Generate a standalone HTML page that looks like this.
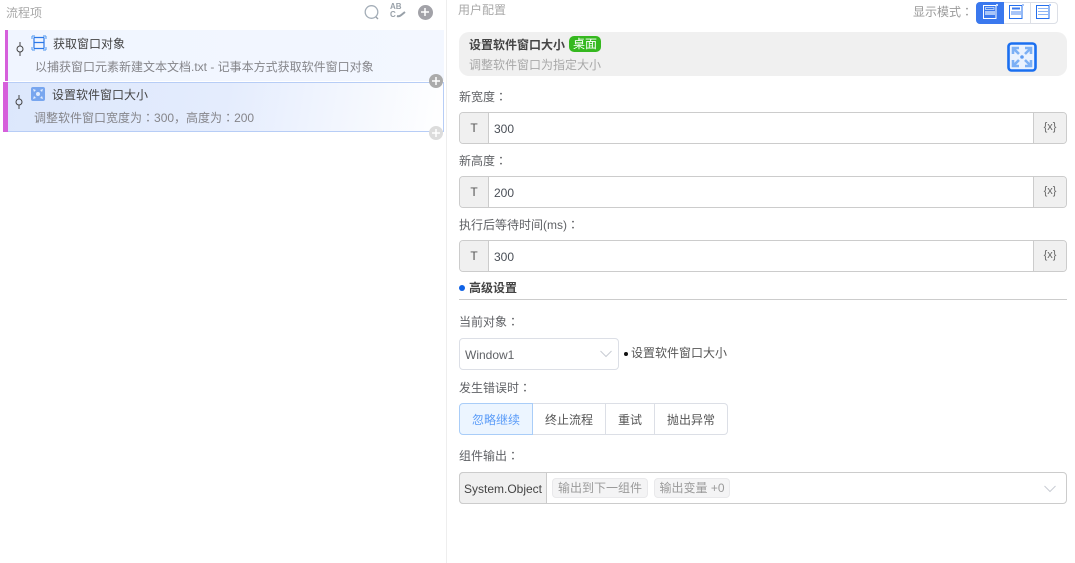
<!DOCTYPE html>
<html><head><meta charset="utf-8"><style>
*{box-sizing:border-box;margin:0;padding:0}
html,body{width:1075px;height:563px;overflow:hidden;background:#fff}
body{position:relative;font:12px/16px "Liberation Sans","Noto Sans CJK SC",sans-serif;color:#606266}
.a{position:absolute;white-space:nowrap}
.c{font-family:"Noto Sans CJK TC",sans-serif}
.lb{position:absolute;left:459px;white-space:nowrap;color:#606266;height:16px}
.inp{position:absolute;left:459px;width:608px;height:32px;border:1px solid #ccc;border-radius:4px;background:#fff;overflow:hidden}
.inp .t{position:absolute;left:0;top:0;bottom:0;width:29px;background:#f0f0f0;border-right:1px solid #ccc;text-align:center;line-height:31px;color:#555}
.inp .v{position:absolute;left:34px;top:0;line-height:32px;color:#4a4f57}
.inp .x{position:absolute;right:0;top:0;bottom:0;width:33px;background:#f0f0f0;border-left:1px solid #ccc;text-align:center;line-height:29px;color:#666;font-size:11px}
.btn{position:absolute;top:403px;height:32px;border:1px solid #dcdfe6;border-left:0;text-align:center;line-height:32px;color:#555;background:#fff}
.tag{position:absolute;top:478px;height:20px;background:#f4f4f5;border:1px solid #e9e9eb;border-radius:4px;color:#9a9a9a;line-height:18px;text-align:center}
.plus{position:absolute;width:14px;height:14px;border-radius:50%}
.plus:before{content:"";position:absolute;left:3px;top:6px;width:8px;height:2px;background:rgba(255,255,255,.75)}
.plus:after{content:"";position:absolute;left:6px;top:3px;width:2px;height:8px;background:rgba(255,255,255,.75)}
.pin{position:absolute;width:10px;height:20px}
</style></head><body>
<div class="a" style="left:446px;top:0;width:1px;height:563px;background:#eeeeee"></div>

<div class="a" style="left:6px;top:5px;color:#a8a8a8">流程项</div>
<svg class="a" style="left:363px;top:4px" width="18" height="17" viewBox="0 0 18 17" fill="none"><circle cx="8.500" cy="8" r="6.300" stroke="#a4aeb8" stroke-width="1.300"/><path d="M13 13l2 2" stroke="#98a0a8" stroke-width="1.300"/></svg>
<div class="a" style="left:390px;top:3px;font-size:8px;line-height:8px;font-weight:bold;color:#98a0a8">AB<br>C</div>
<svg class="a" style="left:395px;top:9px" width="12" height="10" viewBox="0 0 12 10" fill="none"><path d="M2 7c3 1 4-1 8-4" stroke="#98a0a8" stroke-width="2"/></svg>
<div class="plus" style="left:418px;top:5px;width:15px;height:15px;background:#a2a2a8"></div>

<!-- card 1 -->
<div class="a" style="left:5px;top:30px;width:439px;height:51px;background:linear-gradient(90deg,#f0f5ff,#f3f7ff)"></div>
<div class="a" style="left:5px;top:30px;width:3px;height:51px;background:#d65fdb"></div>
<svg class="pin" style="left:15px;top:39px" viewBox="0 0 10 20" fill="none"><path d="M5 3v4M5 13v4" stroke="#444" stroke-width="1"/><circle cx="5" cy="10" r="3" stroke="#444" stroke-width="1"/></svg>
<svg class="a" style="left:31px;top:35px" width="16" height="16" viewBox="0 0 16 16" fill="none"><path d="M3 2.500h10M3 13.500h10M3 2.500v11M13 2.500v11M3 7.500h10" stroke="#2b78e8" stroke-width="1.200"/><path d="M1 1h3M1 1v3M15 1h-3M15 1v3M1 15h3M1 15v-3M15 15h-3M15 15v-3" stroke="#6aa8f2" stroke-width="1.200"/></svg>
<div class="a" style="left:53px;top:36px;color:#444">获取窗口对象</div>
<div class="a" style="left:35px;top:59px;color:#85858a">以捕获窗口元素新建文本文档.txt - 记事本方式获取软件窗口对象</div>

<!-- card 2 -->
<div class="a" style="left:3px;top:82px;width:441px;height:50px;background:linear-gradient(100deg,#dce7fc 0%,#e4ecfd 50%,#ffffff 100%);border:1px solid #b7cdf6;border-left:0"></div>
<div class="a" style="left:3px;top:82px;width:5px;height:50px;background:#d65fdb"></div>
<svg class="pin" style="left:14px;top:92px" viewBox="0 0 10 20" fill="none"><path d="M5 3v4M5 13v4" stroke="#444" stroke-width="1"/><circle cx="5" cy="10" r="3" stroke="#444" stroke-width="1"/></svg>
<svg class="a" style="left:31px;top:87px" width="14" height="14" viewBox="0 0 14 14"><rect width="14" height="14" rx="2" fill="#78a6ef"/><path d="M2 2l3 1-2 2zM12 2l-1 3-2-2zM2 12l1-3 2 2zM12 12l-3-1 2-2z" fill="#e0ebfd"/><circle cx="7" cy="7" r="2" fill="#e0ebfd"/></svg>
<div class="a" style="left:52px;top:87px;color:#444">设置软件窗口大小</div>
<div class="a" style="left:34px;top:110px;color:#85858a">调整软件窗口宽度为<span class="c">：</span>300，高度为<span class="c">：</span>200</div>
<div class="plus" style="left:429px;top:74px;background:#ababab"></div>
<div class="plus" style="left:429px;top:126px;background:#dcdcdc"></div>

<!-- right header -->
<div class="a" style="left:458px;top:2px;color:#a8a8a8">用户配置</div>
<div class="a" style="left:913px;top:4px;color:#9a9a9a">显示模式<span class="c">：</span></div>
<div class="a" style="left:976px;top:2px;width:82px;height:22px;border:1px solid #dcdfe6;border-radius:4px"></div>
<div class="a" style="left:976px;top:2px;width:28px;height:22px;background:#3a78ee;border-radius:4px 0 0 4px"></div>
<div class="a" style="left:1030px;top:3px;width:1px;height:20px;background:#dcdfe6"></div>
<svg class="a" style="left:983px;top:4px" width="15" height="15" viewBox="0 0 15 15" fill="none"><rect x="0.500" y="1.500" width="12.500" height="13" stroke="#fff"/><rect x="2.500" y="3.500" width="8.500" height="2" fill="none" stroke="#cfe0fb" stroke-width=".8"/><rect x="2" y="7" width="10" height="4" fill="#a9c6f8"/><rect x="13" y="0" width="2" height="2" fill="#cfe0fb"/></svg>
<svg class="a" style="left:1009px;top:4px" width="15" height="15" viewBox="0 0 15 15" fill="none"><rect x="0.500" y="1.500" width="12.500" height="13" stroke="#2670ee"/><rect x="3" y="3.500" width="8" height="2" fill="#3a78ee"/><rect x="2" y="7" width="10" height="4" fill="#a9c6f8"/><rect x="13" y="0" width="2" height="2" fill="#a9c6f8"/></svg>
<svg class="a" style="left:1036px;top:4px" width="15" height="15" viewBox="0 0 15 15" fill="none"><rect x="0.500" y="1.500" width="12.500" height="13" stroke="#2670ee"/><path d="M2 4.500h10M2 7.500h10M2 10.500h10" stroke="#8fb6f5"/><rect x="13" y="0" width="2" height="2" fill="#a9c6f8"/></svg>

<div class="a" style="left:459px;top:32px;width:608px;height:44px;background:#f0f0f0;border-radius:10px"></div>
<div class="a" style="left:469px;top:37px;font-weight:bold;color:#444">设置软件窗口大小</div>
<div class="a" style="left:569px;top:36px;width:32px;height:16px;background:#35b81f;border-radius:5px;color:#fff;text-align:center;line-height:16px">桌面</div>
<div class="a" style="left:469px;top:57px;color:#a8a8a8">调整软件窗口为指定大小</div>
<svg class="a" style="left:1007px;top:42px" width="30" height="30" viewBox="0 0 30 30" fill="none"><rect x="1.500" y="1.500" width="27" height="27" rx="3" fill="#eaf2fe" stroke="#1a6ff0" stroke-width="2.600"/><path d="M6 12V6h6M6 6l6 6M24 12V6h-6M24 6l-6 6M6 18v6h6M6 24l6-6M24 18v6h-6M24 24l-6-6" stroke="#7cb0f5" stroke-width="2.600"/><circle cx="15" cy="15" r="1.800" fill="#5f9cf2"/></svg>

<!-- fields -->
<div class="lb" style="top:89px">新宽度<span class="c">：</span></div>
<div class="inp" style="top:112px"><div class="t">T</div><div class="v">300</div><div class="x">{x}</div></div>
<div class="lb" style="top:153px">新高度<span class="c">：</span></div>
<div class="inp" style="top:176px"><div class="t">T</div><div class="v">200</div><div class="x">{x}</div></div>
<div class="lb" style="top:217px">执行后等待时间(ms)<span class="c">：</span></div>
<div class="inp" style="top:240px"><div class="t">T</div><div class="v">300</div><div class="x">{x}</div></div>

<div class="a" style="left:459px;top:285px;width:6px;height:6px;border-radius:50%;background:#0f62e6"></div>
<div class="a" style="left:469px;top:280px;font-weight:bold;color:#444">高级设置</div>
<div class="a" style="left:459px;top:299px;width:608px;height:1px;background:#ccc"></div>

<div class="lb" style="top:314px">当前对象<span class="c">：</span></div>
<div class="a" style="left:459px;top:338px;width:160px;height:32px;border:1px solid #dcdfe6;border-radius:4px"></div>
<div class="a" style="left:465px;top:347px;color:#606266">Window1</div>
<svg class="a" style="left:599px;top:349px" width="14" height="10" viewBox="0 0 14 10" fill="none"><path d="M1.500 2l5.500 5.500L12.500 2" stroke="#c8ccd4" stroke-width="1"/></svg>
<div class="a" style="left:624px;top:352px;width:4px;height:4px;border-radius:50%;background:#111"></div>
<div class="a" style="left:631px;top:345px;color:#555">设置软件窗口大小</div>

<div class="lb" style="top:380px">发生错误时<span class="c">：</span></div>
<div class="btn" style="left:459px;width:74px;background:#ecf5ff;border:1px solid #a9cdf8;border-radius:4px 0 0 4px;color:#5b9cf8">忽略继续</div>
<div class="btn" style="left:533px;width:73px">终止流程</div>
<div class="btn" style="left:606px;width:49px">重试</div>
<div class="btn" style="left:655px;width:73px;border-radius:0 4px 4px 0">抛出异常</div>

<div class="lb" style="top:448px">组件输出<span class="c">：</span></div>
<div class="a" style="left:459px;top:472px;width:608px;height:32px;border:1px solid #ccc;border-radius:4px"></div>
<div class="a" style="left:459px;top:472px;width:88px;height:32px;background:#f0f0f0;border:1px solid #ccc;border-radius:4px 0 0 4px;text-align:center;line-height:32px;color:#444">System.Object</div>
<div class="tag" style="left:552px;width:96px">输出到下一组件</div>
<div class="tag" style="left:654px;width:76px">输出变量 +0</div>
<svg class="a" style="left:1043px;top:484px" width="14" height="10" viewBox="0 0 14 10" fill="none"><path d="M1.500 2l5.500 5.500L12.500 2" stroke="#c8ccd4" stroke-width="1"/></svg>
</body></html>
